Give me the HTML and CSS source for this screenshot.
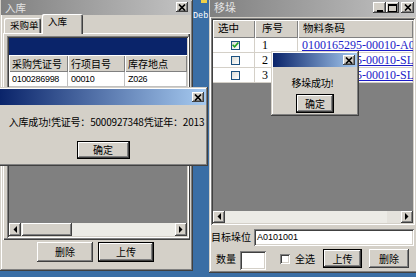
FILE: index.html
```html
<!DOCTYPE html>
<html lang="zh-CN">
<head>
<meta charset="utf-8">
<title>入库 / 移垛</title>
<link rel="stylesheet" href="styles.css">
</head>
<body>
<div class="desk-icon"></div>
<div class="desk-label">Deb</div>

<div class="win win-left">
  <div class="titlebar">
    <span class="title">入库</span>
    <span class="cbtn close-l"><svg width="8" height="7" viewBox="0 0 8 7"><path d="M1 0.5l6 6M7 0.5l-6 6" stroke="#000" stroke-width="1.7"/></svg></span>
  </div>
  <div class="tabs">
    <div class="tab">采购单</div>
    <div class="tab active">入库</div>
  </div>
  <div class="tabpanel">
    <div class="grid">
      <div class="grid-caption"></div>
      <div class="grow head">
        <div class="cell lc1">采购凭证号</div>
        <div class="cell lc2">行项目号</div>
        <div class="cell lc3">库存地点</div>
      </div>
      <div class="grow data">
        <div class="cell lc1 num">0100286998</div>
        <div class="cell lc2 num">00010</div>
        <div class="cell lc3 num">Z026</div>
      </div>
      <div class="grid-empty"></div>
      <div class="hscroll">
        <span class="sbtn"><svg width="4" height="7" viewBox="0 0 4 7"><path d="M4 0v7L0.5 3.5z"/></svg></span>
        <span class="track"><span class="thumb thumb-l"></span></span>
        <span class="sbtn"><svg width="4" height="7" viewBox="0 0 4 7"><path d="M0 0v7l3.5-3.5z"/></svg></span>
      </div>
    </div>
  </div>
  <div class="btnrow">
    <button class="btn wide">删除</button>
    <button class="btn wide default">上传</button>
  </div>
</div>

<div class="win win-right">
  <div class="titlebar tall">
    <span class="title">移垛</span>
    <span class="cbtns">
      <span class="cbtn wbtn"><svg width="6" height="8" viewBox="0 0 6 8"><rect x="0" y="6" width="6" height="2"/></svg></span>
      <span class="cbtn wbtn"><svg width="9" height="8" viewBox="0 0 9 8"><rect x="0.5" y="0.5" width="8" height="7" fill="none" stroke="#000"/><rect width="9" height="2"/></svg></span>
      <span class="cbtn wbtn close-r"><svg width="8" height="7" viewBox="0 0 8 7"><path d="M1 0.5l6 6M7 0.5l-6 6" stroke="#000" stroke-width="1.7"/></svg></span>
    </span>
  </div>
  <div class="grid grid-r">
    <div class="grow rhead">
      <div class="cell rc1">选中</div>
      <div class="cell rc2">序号</div>
      <div class="cell rc3">物料条码</div>
    </div>
    <div class="grow rrow">
      <div class="cell rc1"><span class="xpchk"><svg width="7" height="6" viewBox="0 0 7 6"><path d="M0.6 2.8l2 2 3.8-4.3" stroke="#21a121" stroke-width="1.6" fill="none"/></svg></span></div>
      <div class="cell rc2 ser">1</div>
      <div class="cell rc3"><a class="link">0100165295-00010-A01</a></div>
    </div>
    <div class="grow rrow">
      <div class="cell rc1"><span class="xpchk"></span></div>
      <div class="cell rc2 ser">2</div>
      <div class="cell rc3"><a class="link">0100165295-00010-SLF</a></div>
    </div>
    <div class="grow rrow">
      <div class="cell rc1"><span class="xpchk"></span></div>
      <div class="cell rc2 ser">3</div>
      <div class="cell rc3"><a class="link">0100165295-00010-SLF</a></div>
    </div>
    <div class="grid-empty"></div>
    <div class="hscroll small">
      <span class="sbtn"><svg width="4" height="7" viewBox="0 0 4 7"><path d="M4 0v7L0.5 3.5z"/></svg></span>
      <span class="track"><span class="thumb thumb-r"></span></span>
      <span class="sbtn"><svg width="4" height="7" viewBox="0 0 4 7"><path d="M0 0v7l3.5-3.5z"/></svg></span>
    </div>
  </div>
  <div class="field-row">
    <span class="lbl">目标垛位</span>
    <span class="input wide-input">A0101001</span>
  </div>
  <div class="bottom-row">
    <span class="lbl qty">数量</span>
    <span class="input qty-input"></span>
    <span class="chk"></span>
    <span class="lbl all">全选</span>
    <button class="btn default up">上传</button>
    <button class="btn del">删除</button>
  </div>
</div>

<div class="dialog dlg-left">
  <div class="dlg-title">
    <span class="cbtn dclose"><svg width="8" height="7" viewBox="0 0 8 7"><path d="M1 0.5l6 6M7 0.5l-6 6" stroke="#000" stroke-width="1.7"/></svg></span>
  </div>
  <div class="dlg-body">
    <div class="msg">入库成功!凭证号：5000927348凭证年：2013</div>
    <button class="btn default ok-l">确定</button>
  </div>
</div>

<div class="dialog dlg-right">
  <div class="dlg-title small">
    <span class="cbtn dclose"><svg width="8" height="7" viewBox="0 0 8 7"><path d="M1 0.5l6 6M7 0.5l-6 6" stroke="#000" stroke-width="1.7"/></svg></span>
  </div>
  <div class="dlg-body">
    <div class="msg msg-r">移垛成功!</div>
    <button class="btn default ok-r">确定</button>
  </div>
</div>
</body>
</html>
```

FILE: styles.css
```css
* { box-sizing: border-box; }

body {
  margin: 0;
  width: 416px;
  height: 277px;
  overflow: hidden;
  position: relative;
  background: #3a6ea5;
  font-family: "Noto Sans CJK SC", "Liberation Sans", sans-serif;
  font-size: 10px;
  line-height: 1;
  color: #000;
}

/* desktop */
.desk-icon {
  position: absolute;
  left: 201px;
  top: 0;
  width: 6px;
  height: 3px;
  background: #f0d048;
}
.desk-label {
  position: absolute;
  left: 193px;
  top: 12px;
  font-family: "Liberation Mono", monospace;
  font-size: 8.5px;
  color: #fff;
}

/* windows */
.win {
  position: absolute;
  top: 0;
  background: #d4d0c8;
  display: flex;
  flex-direction: column;
  box-shadow: inset -1px -1px #404040, inset 1px 1px #d4d0c8, inset -2px -2px #808080, inset 2px 2px #fff;
}
.win-left {
  left: 0;
  width: 193px;
  height: 271px;
  padding: 0 3px 3px 3px;
}
.win-right {
  left: 209px;
  width: 209px;
  height: 273px;
  padding: 0 3px 3px 2px;
}

.titlebar {
  display: flex;
  align-items: center;
  height: 15px;
  margin: 0 -1px 0 -2px;
  padding: 0 3px 1px 4px;
  background: linear-gradient(to right, #808080, #c4c4c4);
  color: #e4e4e4;
}
.titlebar.tall {
  height: 17px;
  margin: 0 -2px 1px -1px;
}
.title {
  font-size: 10.5px;
  line-height: 13px;
}
.titlebar.tall .title { font-size: 11px; }
.close-l { margin-left: auto; }

.cbtns {
  margin-left: auto;
  display: flex;
  align-items: center;
}
.cbtn {
  width: 13px;
  height: 11px;
  background: #d4d0c8;
  box-shadow: inset -1px -1px #404040, inset 1px 1px #fff, inset -2px -2px #808080;
  display: flex;
  align-items: center;
  justify-content: center;
}
.close-l { width: 12px; height: 10px; }
.close-r { margin-left: 2px; }

/* tabs */
.tabs {
  display: flex;
  align-items: flex-end;
  height: 18px;
  padding-left: 1px;
}
.tab {
  height: 15px;
  width: 37px;
  padding: 3px 0 0 6px;
  border-radius: 2px 2px 0 0;
  box-shadow: inset 1px 1px #fff, inset -1px 0 #404040, inset -2px 0 #808080;
  font-size: 9.5px;
}
.tab.active {
  height: 20px;
  width: 41px;
  margin-left: 1px;
  margin-bottom: -1px;
  padding-top: 3px;
  position: relative;
  z-index: 1;
  background: #d4d0c8;
}

.tabpanel {
  flex: 1;
  display: flex;
  flex-direction: column;
  padding: 3px 1px 2px 4px;
  box-shadow: inset 1px 1px #fff, inset -1px -1px #404040, inset -2px -2px #808080;
}

/* grids */
.grid {
  flex: 1;
  display: flex;
  flex-direction: column;
  padding: 2px;
  background: #fff;
  box-shadow: inset 1px 1px #808080, inset -1px -1px #fff, inset 2px 2px #404040, inset -2px -2px #d4d0c8;
  overflow: hidden;
}
.grid-caption {
  height: 17px;
  background: #0a246a;
  flex: none;
}
.grow {
  display: flex;
  flex: none;
}
.grow.head {
  height: 17px;
  background: #d4d0c8;
}
.grow.data {
  height: 15px;
  background: #fff;
}
.cell {
  display: flex;
  align-items: center;
  padding-left: 3px;
  white-space: nowrap;
  overflow: hidden;
}
.head .cell {
  box-shadow: inset 1px 1px #fff, inset -1px -1px #808080;
}
.data .cell {
  box-shadow: inset -1px -1px #c0c0c0;
}
.lc1 { width: 59px; }
.lc2 { width: 57px; }
.lc3 { flex: 1; }
.num {
  font-family: "Liberation Sans", sans-serif;
  font-size: 9px;
  letter-spacing: -0.3px;
}
.grid-empty {
  flex: 1;
  background: #808080;
}
.hscroll {
  flex: none;
  height: 13px;
  display: flex;
}
.hscroll.small { height: 12px; }
.sbtn {
  width: 12px;
  background: #d4d0c8;
  box-shadow: inset -1px -1px #404040, inset 1px 1px #fff, inset -2px -2px #808080;
  display: flex;
  align-items: center;
  justify-content: center;
}
.track {
  flex: 1;
  display: flex;
  background: #ecebe6;
}
.thumb {
  background: #d4d0c8;
  box-shadow: inset -1px -1px #404040, inset 1px 1px #fff, inset -2px -2px #808080;
}
.thumb-l { width: 50px; margin-left: 1px; }
.thumb-r { width: 14px; margin-left: auto; background: #e4e2dc; box-shadow: none; }

.btnrow {
  display: flex;
  justify-content: center;
  gap: 5px;
  height: 20px;
  margin: 2px 0 6px 0;
  padding-right: 2px;
}

/* buttons */
.btn {
  font-family: "Noto Sans CJK SC", sans-serif;
  font-size: 10px;
  line-height: 1;
  padding: 0;
  border: 0;
  background: #d4d0c8;
  color: #000;
  box-shadow: inset -1px -1px #404040, inset 1px 1px #fff, inset -2px -2px #808080;
}
.btn.default {
  box-shadow: inset 0 0 0 1px #000, inset -2px -2px #404040, inset 2px 2px #fff, inset -3px -3px #808080;
}
.btn.wide { width: 56px; height: 20px; }

/* right grid */
.grid-r {
  flex: none;
  height: 207px;
}
.rhead {
  height: 18px;
  background: #d4d0c8;
}
.rhead .cell {
  font-size: 10.5px;
  padding-left: 5px;
  box-shadow: inset 1px 1px #fff, inset -1px -1px #808080;
}
.rhead .rc2 { padding-left: 7px; }
.rrow {
  height: 15px;
  background: #fff;
}
.rrow .cell {
  box-shadow: inset -1px -1px #d4d0c8;
}
.rc1 { width: 42px; }
.rrow .rc1 { justify-content: center; padding-left: 2px; }
.rc2 { width: 43px; }
.rc3 { flex: 1; }
.rrow .rc2 { padding-left: 7px; }
.rrow .rc3 { padding-left: 4px; }
.ser {
  font-family: "Liberation Serif", serif;
  font-size: 12px;
}
.link {
  font-family: "Liberation Serif", serif;
  font-size: 12px;
  color: #1c1cc8;
  text-decoration: underline;
}
.xpchk {
  width: 9px;
  height: 9px;
  border: 1px solid #1c5180;
  background: linear-gradient(135deg, #dcdcd6, #fff);
  display: flex;
  align-items: center;
  justify-content: center;
}

.field-row {
  display: flex;
  align-items: center;
  height: 19px;
  margin-top: 3px;
  padding-right: 1px;
}
.lbl {
  font-size: 10px;
  white-space: nowrap;
}
.input {
  background: #fff;
  box-shadow: inset 1px 1px #808080, inset -1px -1px #fff, inset 2px 2px #404040, inset -2px -2px #d4d0c8;
  display: flex;
  align-items: center;
  padding-left: 3px;
  font-family: "Liberation Sans", sans-serif;
  font-size: 9px;
}
.wide-input {
  flex: 1;
  height: 17px;
  margin-left: 3px;
}
.bottom-row {
  display: flex;
  align-items: center;
  height: 23px;
  margin-top: 1px;
}
.qty { margin-left: 5px; }
.qty-input {
  width: 26px;
  height: 19px;
  margin-left: 4px;
  margin-top: 3px;
}
.chk {
  width: 10px;
  height: 10px;
  margin-left: 14px;
  background: #fff;
  box-shadow: inset 1px 1px #808080, inset -1px -1px #fff, inset 2px 2px #404040, inset -2px -2px #d4d0c8;
}
.all { margin-left: 5px; }
.btn.up { width: 39px; height: 19px; margin-left: 8px; }
.btn.del { width: 40px; height: 19px; margin-left: 7px; }

/* dialogs */
.dialog {
  position: absolute;
  background: #d4d0c8;
  padding: 2px;
  display: flex;
  flex-direction: column;
  box-shadow: inset -1px -1px #404040, inset 1px 1px #d4d0c8, inset -2px -2px #808080, inset 2px 2px #fff;
}
.dlg-left {
  left: -2px;
  top: 87px;
  width: 210px;
  height: 79px;
}
.dlg-right {
  left: 271px;
  top: 51px;
  width: 88px;
  height: 65px;
}
.dlg-title {
  height: 16px;
  display: flex;
  align-items: center;
  justify-content: flex-end;
  padding-right: 2px;
  background: linear-gradient(to right, #0a246a, #a6caf0);
}
.dlg-title.small { height: 14px; padding-right: 2px; }
.dclose { width: 12px; height: 10px; }
.dlg-body {
  flex: 1;
  display: flex;
  flex-direction: column;
  align-items: center;
}
.msg {
  white-space: nowrap;
  margin-top: 12px;
  font-size: 10px;
  letter-spacing: -0.2px;
  padding-left: 7px;
}
.msg-r {
  margin-top: 11px;
  padding-left: 0;
  margin-left: -5px;
}
.ok-l {
  width: 53px;
  height: 18px;
  margin-top: 14px;
}
.ok-r {
  width: 38px;
  height: 19px;
  margin-top: 6px;
}
```
